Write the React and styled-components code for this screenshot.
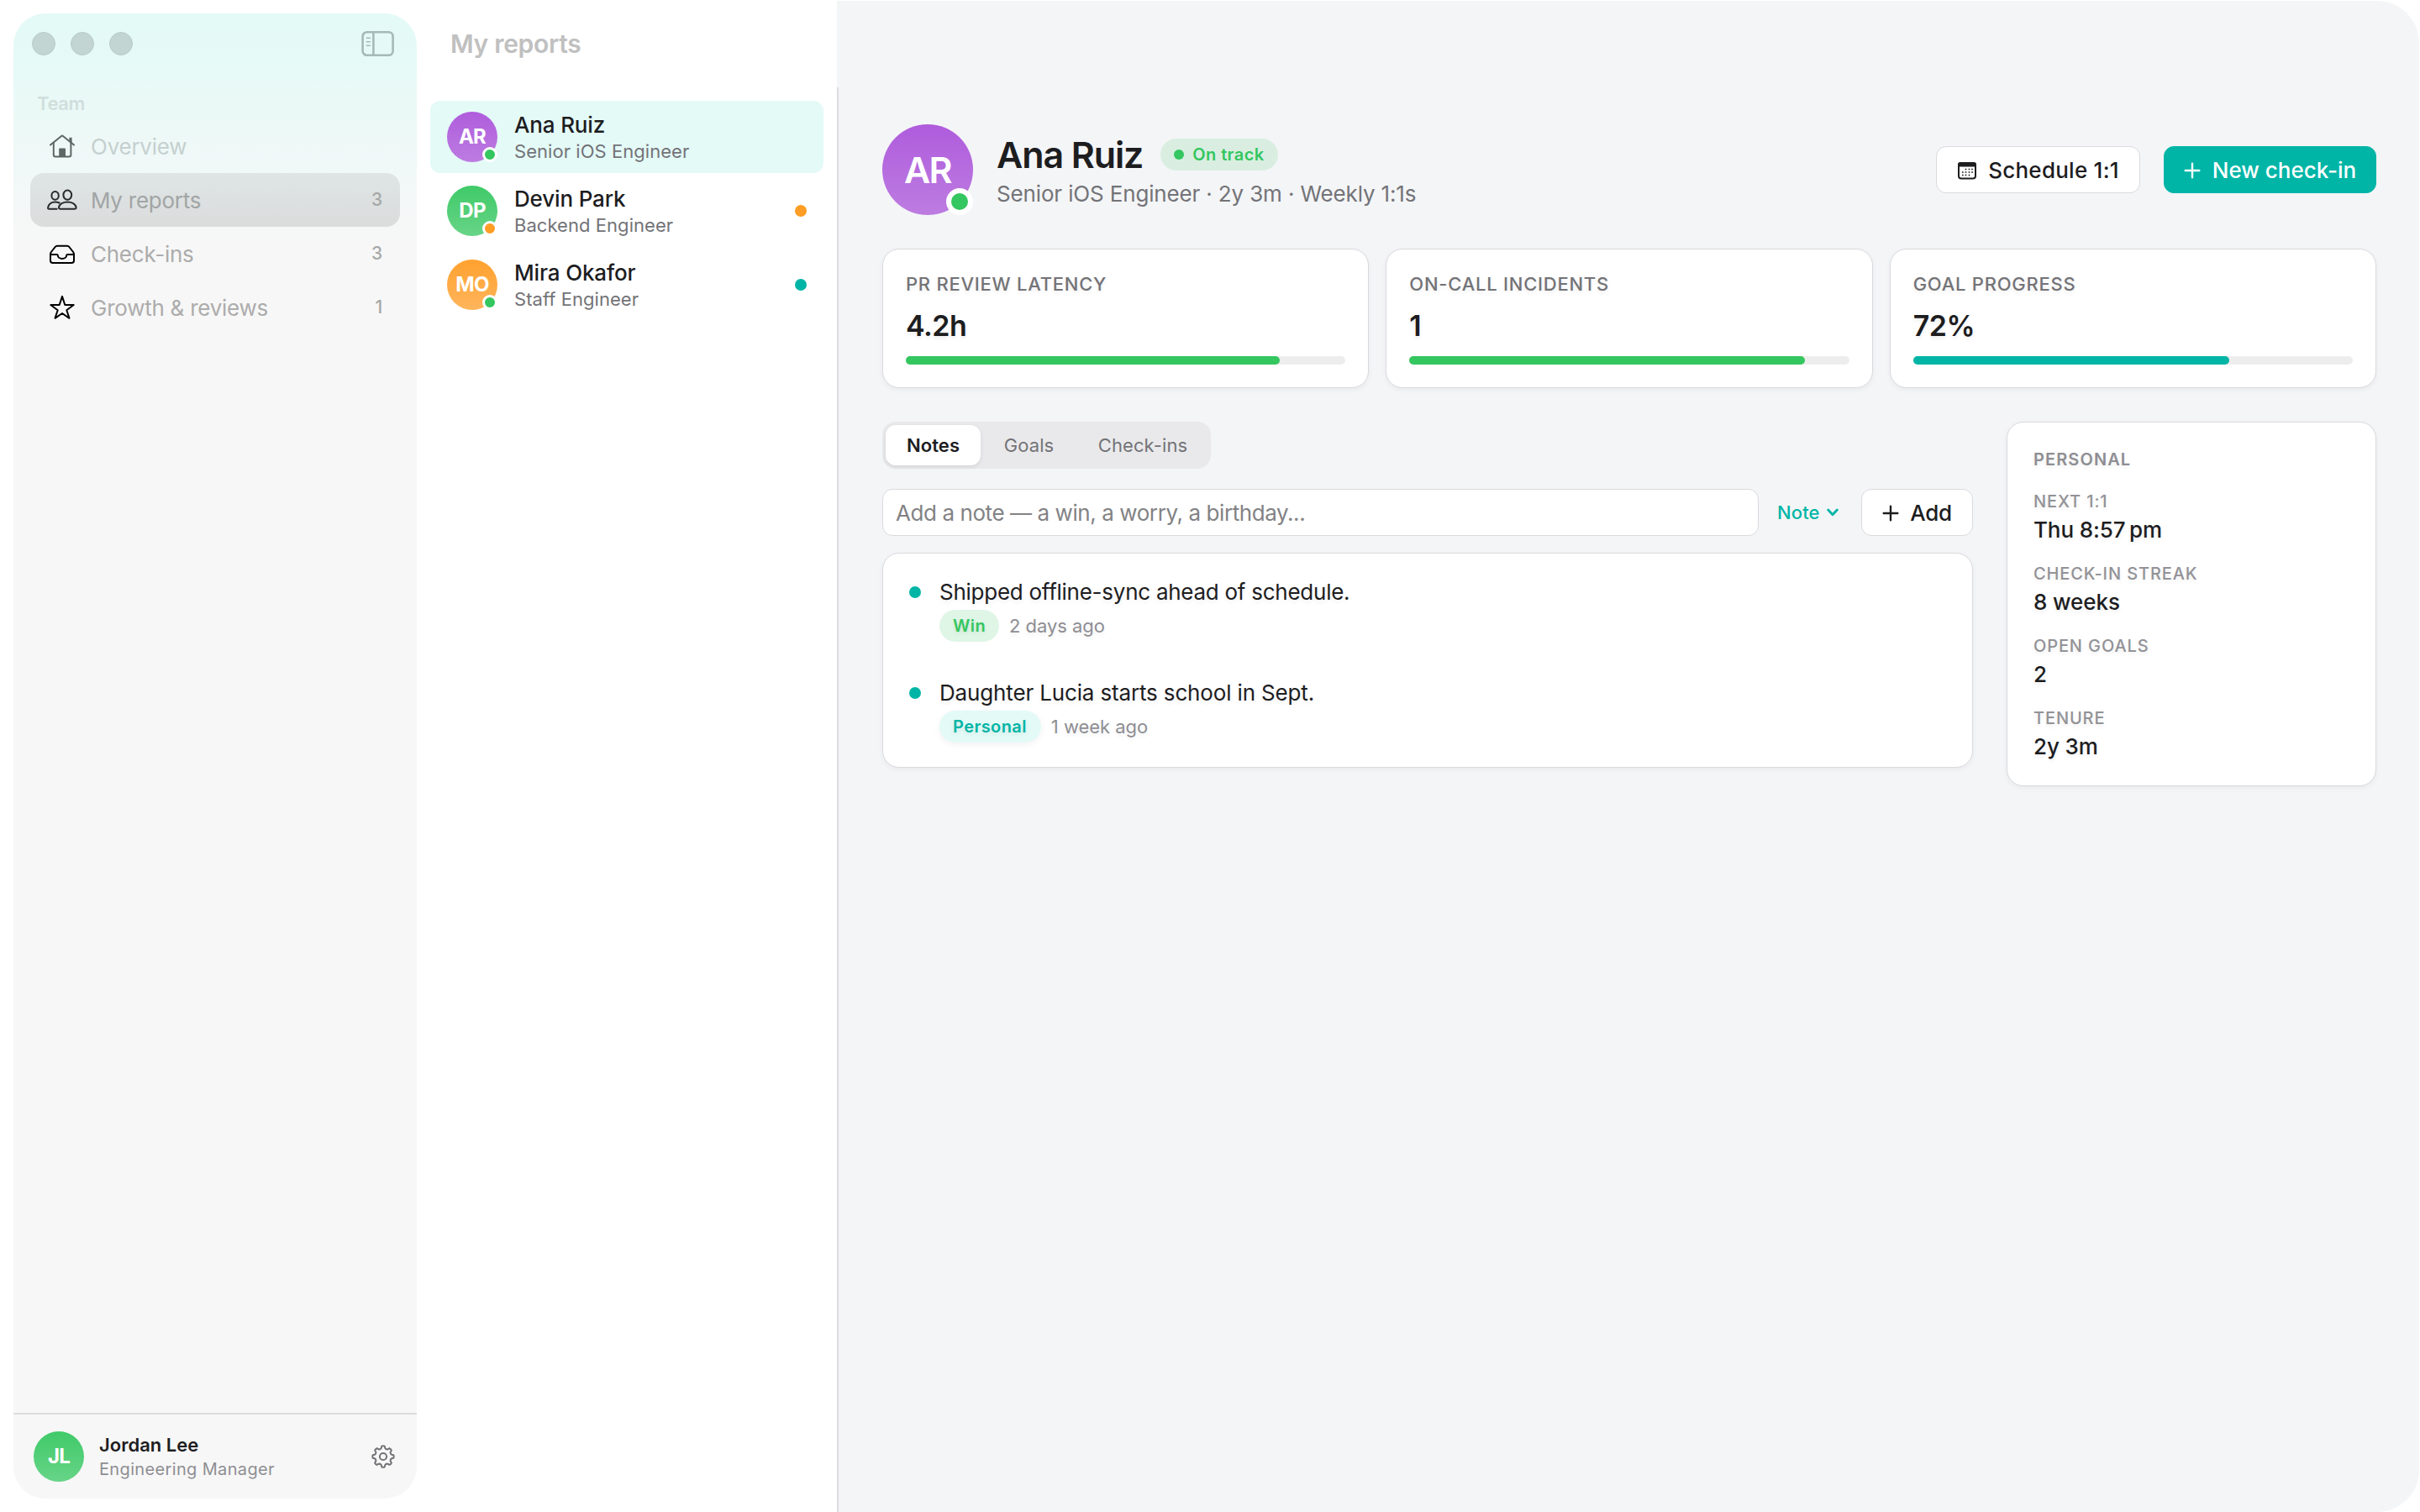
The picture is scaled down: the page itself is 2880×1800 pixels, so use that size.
import React from 'react';
import styled, { createGlobalStyle } from 'styled-components';

const teal = '#00b5a6';
const green = '#34c65f';
const orange = '#ff9d24';
const ink = '#1d1d1f';
const muted = '#737377';
const faint = '#8e8e93';
const cardBorder = '#dadade';

const gradients = {
  purple: 'linear-gradient(180deg, #af5cdc 0%, #bd7ce1 100%)',
  green: 'linear-gradient(180deg, #40ca69 0%, #67d487 100%)',
  orange: 'linear-gradient(180deg, #ffa12f 0%, #ffb55c 100%)',
};

const GlobalStyle = createGlobalStyle`
  * { box-sizing: border-box; }
  body {
    margin: 0;
    background: #fff;
    color: ${ink};
    font-family: Inter, 'Noto Sans', sans-serif;
    font-size: 26px;
    line-height: 32px;
  }
  button, input { font: inherit; margin: 0; }
`;

const Window = styled.div`
  display: flex;
  width: 2880px;
  height: 1800px;
  overflow: hidden;
  background: #fff;
`;

/* ---------- Sidebar ---------- */

const Sidebar = styled.aside`
  display: flex;
  flex-direction: column;
  flex: none;
  width: 480px;
  margin: 16px 0 16px 16px;
  border-radius: 38px;
  overflow: hidden;
  background: linear-gradient(180deg, #e3faf7 0, #e5faf7 44px, #eaf9f6 112px, #f1f8f8 186px, #f7f7f7 270px);
`;

const TitleBar = styled.div`
  display: flex;
  align-items: center;
  justify-content: space-between;
  height: 72px;
  padding: 0 26px 0 22px;
`;

const Lights = styled.div`
  display: flex;
  gap: 18px;
`;

const Light = styled.span`
  width: 28px;
  height: 28px;
  border-radius: 50%;
  background: #c3d5d3;
  border: 1px solid #b9cbc9;
`;

const SectionLabel = styled.div`
  margin-top: 16px;
  padding-left: 28px;
  font-size: 22px;
  font-weight: 600;
  line-height: 38px;
  letter-spacing: -0.4px;
  color: #d0dfdc;
`;

const Nav = styled.nav`
  display: flex;
  flex-direction: column;
  padding: 0 20px;
`;

const NavItem = styled.a`
  display: flex;
  align-items: center;
  height: 64px;
  padding: 0 21px 0 18px;
  border-radius: 16px;
  letter-spacing: -0.25px;
  color: ${p => p.$color};
  background: ${p => (p.$active ? 'linear-gradient(180deg, rgba(0, 0, 0, 0.08), rgba(0, 0, 0, 0.11))' : 'transparent')};
`;

const NavIcon = styled.span`
  display: flex;
  justify-content: center;
  width: 40px;
  margin-right: 14px;
  color: ${p => p.$color};
`;

const NavLabel = styled.span`
  padding-top: 2px;
`;

const NavCount = styled.span`
  margin-left: auto;
  font-size: 21px;
  font-weight: 500;
  color: #a6a8a7;
`;

const SidebarFooter = styled.div`
  display: flex;
  align-items: center;
  height: 102px;
  margin-top: auto;
  padding: 0 26px 0 24px;
  border-top: 2px solid #dddddd;
`;

const UserText = styled.div`
  flex: 1;
  margin-left: 18px;
  line-height: 28px;
`;

const UserName = styled.div`
  font-size: 22px;
  font-weight: 600;
`;

const UserRole = styled.div`
  margin: 1px 0 -1px;
  font-size: 20px;
  letter-spacing: 0.35px;
  color: ${faint};
`;

/* ---------- Avatar ---------- */

const AvatarCircle = styled.div`
  position: relative;
  display: flex;
  align-items: center;
  justify-content: center;
  flex: none;
  width: ${p => (p.$large ? 108 : 60)}px;
  height: ${p => (p.$large ? 108 : 60)}px;
  border-radius: 50%;
  background: ${p => gradients[p.$tone]};
  color: #fff;
  font-size: ${p => (p.$large ? 43 : 24)}px;
  font-weight: ${p => (p.$large ? 600 : 700)};
  letter-spacing: ${p => (p.$large ? -1.6 : -0.8)}px;
`;

const StatusBadge = styled.span`
  position: absolute;
  right: 0;
  bottom: 0;
  width: ${p => (p.$large ? 32 : 18)}px;
  height: ${p => (p.$large ? 32 : 18)}px;
  border: ${p => (p.$large ? 6 : 3)}px solid #fff;
  border-radius: 50%;
  background: ${p => p.$color};
`;

/* ---------- Reports list ---------- */

const ListPane = styled.section`
  flex: none;
  width: 500px;
  padding: 0 16px;
`;

const ListTitle = styled.h1`
  margin: 0;
  padding-left: 24px;
  height: 120px;
  font-size: 30px;
  font-weight: 600;
  line-height: 104px;
  letter-spacing: -0.3px;
  color: #c0c0c0;
`;

const ReportList = styled.div`
  display: flex;
  flex-direction: column;
  gap: 2px;
`;

const ReportRow = styled.div`
  display: flex;
  align-items: center;
  height: 86px;
  padding: 0 20px;
  border-radius: 12px;
  background: ${p => (p.$active ? '#e4faf7' : 'transparent')};
`;

const ReportText = styled.div`
  display: flex;
  flex-direction: column;
  gap: 1px;
  flex: 1;
  margin-left: 20px;
`;

const ReportName = styled.div`
  margin-top: 1px;
  font-weight: 500;
  letter-spacing: -0.15px;
`;

const ReportRole = styled.div`
  font-size: 22px;
  line-height: 28px;
  letter-spacing: 0.05px;
  color: ${muted};
`;

const Dot = styled.span`
  flex: none;
  width: ${p => p.$size || 14}px;
  height: ${p => p.$size || 14}px;
  border-radius: 50%;
  background: ${p => p.$color};
`;

/* ---------- Main ---------- */

const Main = styled.main`
  flex: 1;
  display: flex;
  min-width: 0;
  margin: 1px 1px 0 0;
  background: #f4f5f7;
  border-radius: 0 50px 50px 0;
`;

const Divider = styled.div`
  flex: none;
  width: 2px;
  margin-top: 103px;
  background: #dddde0;
`;

const Content = styled.div`
  flex: 1;
  min-width: 0;
  padding: 147px 51px 0 52px;
`;

const ProfileHeader = styled.header`
  display: flex;
  align-items: center;
  height: 108px;
`;

const ProfileText = styled.div`
  flex: 1;
  margin-left: 28px;
`;

const NameLine = styled.div`
  display: flex;
  align-items: center;
  gap: 21px;
  height: 52px;
`;

const ProfileName = styled.h2`
  margin: 0;
  font-size: 43px;
  font-weight: 600;
  line-height: 52px;
  letter-spacing: -1.1px;
`;

const ProfileMeta = styled.div`
  padding: 5px 0 0;
  margin-bottom: -1px;
  letter-spacing: -0.15px;
  color: ${muted};
`;

const pillColors = {
  green: { bg: '#dff5e6', fg: green },
  mint: { bg: '#d9eee1', fg: green },
  teal: { bg: '#e4faf7', fg: teal },
};

const Pill = styled.span`
  display: inline-flex;
  align-items: center;
  gap: 10px;
  height: 38px;
  padding: 0 ${p => (p.$tone === 'green' ? 16 : 17)}px 0 16px;
  border-radius: 19px;
  font-size: 20px;
  font-weight: 600;
  line-height: 36px;
  letter-spacing: 0.4px;
  background: ${p => pillColors[p.$tone].bg};
  color: ${p => pillColors[p.$tone].fg};
  box-shadow: ${p => (p.$tone === 'teal' ? '0 3px 8px rgba(0, 0, 0, 0.05)' : 'none')};
`;

const Actions = styled.div`
  display: flex;
  gap: 28px;
`;

const Button = styled.button`
  display: inline-flex;
  align-items: center;
  justify-content: center;
  flex: none;
  gap: ${p => p.$gap}px;
  width: ${p => p.$width}px;
  height: 56px;
  padding: 2px 0 0;
  border: 1px solid ${p => (p.$primary ? teal : cardBorder)};
  border-radius: 12px;
  background: ${p => (p.$primary ? teal : '#fff')};
  color: ${p => (p.$primary ? '#fff' : ink)};
  font-weight: 500;
  letter-spacing: ${p => p.$tracking || 0}px;
`;

const Card = styled.div`
  border: 1px solid ${cardBorder};
  border-radius: 20px;
  background: #fff;
  box-shadow: 0 2px 6px rgba(0, 0, 0, 0.05);
  text-shadow: 0 3px 5px rgba(0, 0, 0, 0.07);
`;

const Stats = styled.div`
  display: grid;
  grid-template-columns: repeat(3, 1fr);
  gap: 20px;
  margin-top: 40px;
`;

const StatCard = styled(Card)`
  height: 166px;
  padding: 27px;
`;

const StatLabel = styled.div`
  font-size: 22px;
  font-weight: 500;
  line-height: 28px;
  letter-spacing: 0.75px;
  color: ${muted};
`;

const StatValue = styled.div`
  margin: 16px 0;
  font-size: 34px;
  font-weight: 600;
  line-height: 40px;
  letter-spacing: -0.5px;
`;

const Track = styled.div`
  height: 10px;
  border-radius: 5px;
  background: #ededed;
`;

const Fill = styled.div`
  height: 100%;
  border-radius: 5px;
  background: ${p => p.$color};
`;

const Columns = styled.div`
  display: grid;
  grid-template-columns: 1fr 440px;
  align-items: start;
  gap: 40px;
  margin-top: 40px;
`;

const Tabs = styled.div`
  display: inline-flex;
  height: 56px;
  padding: 4px 3px 4px 4px;
  border-radius: 16px;
  background: #e9e9eb;
`;

const Tab = styled.div`
  width: ${p => p.$width}px;
  border-radius: 12px;
  font-size: 22px;
  line-height: 48px;
  text-align: center;
  font-weight: ${p => (p.$active ? 600 : 400)};
  letter-spacing: 0.08px;
  color: ${p => (p.$active ? ink : muted)};
  background: ${p => (p.$active ? '#fff' : 'transparent')};
  box-shadow: ${p => (p.$active ? '0 2px 5px rgba(0, 0, 0, 0.09)' : 'none')};
`;

const Composer = styled.div`
  display: flex;
  align-items: center;
  height: 56px;
  margin: 24px 0 20px;
`;

const NoteInput = styled.input`
  flex: 1;
  min-width: 0;
  height: 56px;
  padding: 1px 16px 0 15px;
  border: 1px solid ${cardBorder};
  border-radius: 12px;
  background: #fff;
  letter-spacing: -0.42px;
  outline: none;
  &::placeholder {
    color: #828284;
    opacity: 1;
  }
`;

const TypePicker = styled.div`
  display: flex;
  align-items: center;
  gap: 8px;
  width: 122px;
  padding-left: 22px;
  font-size: 22px;
  font-weight: 500;
  letter-spacing: 0.1px;
  color: ${teal};
`;

const NotesCard = styled(Card)`
  display: flex;
  flex-direction: column;
  gap: 45px;
  padding: 30px 31px 29px;
`;

const Note = styled.div`
  display: grid;
  grid-template-columns: 14px 1fr;
  column-gap: 22px;
  row-gap: 5px;
  align-items: center;
`;

const NoteText = styled.div`
  letter-spacing: ${p => p.$tracking}px;
`;

const NoteMeta = styled.div`
  grid-column: 2;
  display: flex;
  align-items: center;
  gap: 12px;
`;

const NoteTime = styled.span`
  font-size: 22px;
  letter-spacing: -0.05px;
  color: ${faint};
`;

const PersonalCard = styled(Card)`
  display: flex;
  flex-direction: column;
  gap: 23px;
  padding: 31px 30px 30px 31px;
`;

const PersonalTitle = styled.div`
  margin-bottom: 1px;
  font-size: 20px;
  font-weight: 600;
  line-height: 26px;
  letter-spacing: 1.1px;
  color: ${faint};
`;

const FactLabel = styled.div`
  margin-bottom: 5px;
  font-size: 20px;
  font-weight: 500;
  line-height: 26px;
  letter-spacing: 0.88px;
  color: #929297;
`;

const FactValue = styled.div`
  font-weight: 500;
  letter-spacing: -0.1px;
`;

/* ---------- Icons ---------- */

const stroke = { fill: 'none', stroke: 'currentColor', strokeLinecap: 'round', strokeLinejoin: 'round' };

const PanelIcon = () => (
  <svg width="40" height="32" viewBox="0 0 40 32" {...stroke} stroke="#a6b9b7" strokeWidth="2.6">
    <rect x="1.6" y="2.3" width="36" height="27.4" rx="5" />
    <path d="M14.4 2.3v27.4" />
    <path d="M6.4 9.2h4M6.4 13.7h4M6.4 18.2h4" strokeWidth="1.6" />
  </svg>
);

const HomeIcon = () => (
  <svg width="32" height="30" viewBox="0 0 32 30" {...stroke} strokeWidth="2">
    <path d="M2 13.6 15.1 2.9q.9-.7 1.8 0L30 13.6" />
    <path d="M5.8 11v14.2q0 2.3 2.3 2.3h16q2.3 0 2.3-2.3V11" />
    <path d="M24.4 4.7h3.2v7.4l-3.2-2.7z" fill="currentColor" stroke="none" />
    <path d="M12.2 27.5v-9q0-1 1-1h5.8q1 0 1 1v9z" fill="currentColor" stroke="none" />
  </svg>
);

const PeopleIcon = () => (
  <svg width="36" height="26" viewBox="0 0 36 26" {...stroke} strokeWidth="2">
    <ellipse cx="9.6" cy="7.9" rx="4.2" ry="4.8" />
    <ellipse cx="24.3" cy="7.1" rx="4.9" ry="5.6" />
    <path d="M11.6 23.7H2.4q-1.6 0-1.3-1.6C1.9 18 5.3 15.4 9.6 15.4q2.8 0 5 1.1" />
    <path d="M15.6 23.7q-2 0-1.6-1.9c.8-3.9 5-6.4 10.3-6.4s9.5 2.5 10.3 6.4q.4 1.9-1.6 1.9z" />
  </svg>
);

const TrayIcon = () => (
  <svg width="32" height="26" viewBox="0 -2 32 26" {...stroke} strokeWidth="2">
    <path d="M2 11.8v7.4q0 2.8 2.8 2.8h22.4q2.8 0 2.8-2.8v-7.4q0-1.6-.9-2.8l-4.7-6q-.9-1.2-2.4-1.2H10q-1.5 0-2.4 1.2L2.9 9Q2 10.2 2 11.8z" />
    <path d="M2.2 11.9h7.4q1.2 0 1.2 1.1c0 2.2 2.3 3.9 5.2 3.9s5.2-1.7 5.2-3.9q0-1.1 1.2-1.1h7.4" />
  </svg>
);

const StarIcon = () => (
  <svg width="32" height="30" viewBox="0 0 32 30" {...stroke} strokeWidth="2">
    <path d="M16 1.9 19.3 12h10.4l-8.4 6.2 3.2 9.6-8.5-5.8-8.5 5.8 3.2-9.6L2.3 12h10.4z" />
  </svg>
);

// outline of an eight-tooth cog, one tooth pointing up
const cogPath = (() => {
  const pt = (r, deg) => {
    const a = ((deg - 90) * Math.PI) / 180;
    return `${(14 + r * Math.cos(a)).toFixed(2)} ${(14 + r * Math.sin(a)).toFixed(2)}`;
  };
  let d = '';
  for (let i = 0; i < 8; i++) {
    const t = i * 45;
    d += `${i ? 'L' : 'M'}${pt(10.3, t - 13)}L${pt(12.4, t - 8)}Q${pt(13.1, t)} ${pt(12.4, t + 8)}L${pt(10.3, t + 13)}`;
    d += `Q${pt(8.9, t + 22.5)} ${pt(10.3, t + 32)}`;
  }
  return `${d}Z`;
})();

const GearIcon = () => (
  <svg width="28" height="28" viewBox="0 0 28 28" {...stroke} stroke="#737377" strokeWidth="2">
    <path d={cogPath} />
    <circle cx="14" cy="14" r="4.1" />
  </svg>
);

const dots = [
  [10.5, 9.5], [14.5, 9.5], [18, 9.5],
  [6.8, 13], [10.5, 13], [14.5, 13], [18, 13],
  [6.8, 16.5], [10.5, 16.5], [14.5, 16.5],
];

const CalendarIcon = () => (
  <svg width="24" height="22" viewBox="0 0 24 22">
    <rect x="2" y="2" width="20" height="18.4" rx="3" fill="none" stroke={ink} strokeWidth="2" />
    <path d="M1 6.600V4.200Q1 1 4.200 1h15.600Q23 1 23 4.200v2.400z" fill={ink} />
    {dots.map(([x, y]) => <rect key={`${x}-${y}`} x={x - 0.8} y={y - 0.8} width="1.6" height="1.6" fill={ink} />)}
  </svg>
);

const PlusIcon = () => (
  <svg width="20" height="20" viewBox="0 0 20 20" {...stroke} strokeWidth="2.4">
    <path d="M10 1.7v16.6M1.7 10h16.6" />
  </svg>
);

const ChevronIcon = () => (
  <svg width="14" height="10" viewBox="0 0 14 10" {...stroke} strokeWidth="2.8">
    <path d="M1.7 2 7 7.7 12.3 2" />
  </svg>
);

/* ---------- Data ---------- */

const navItems = [
  { label: 'Overview', icon: HomeIcon, color: '#c5d0cf', iconColor: '#5d6765' },
  { label: 'My reports', icon: PeopleIcon, color: '#a1a5a5', iconColor: '#272b2b', count: 3, active: true },
  { label: 'Check-ins', icon: TrayIcon, color: '#acacac', iconColor: '#000', count: 3 },
  { label: 'Growth & reviews', icon: StarIcon, color: '#acacac', iconColor: '#000', count: 1 },
];

const reports = [
  { initials: 'AR', name: 'Ana Ruiz', role: 'Senior iOS Engineer', tone: 'purple', status: green, active: true },
  { initials: 'DP', name: 'Devin Park', role: 'Backend Engineer', tone: 'green', status: orange, flag: orange },
  { initials: 'MO', name: 'Mira Okafor', role: 'Staff Engineer', tone: 'orange', status: green, flag: teal },
];

const stats = [
  { label: 'PR REVIEW LATENCY', value: '4.2h', percent: 85, color: green },
  { label: 'ON-CALL INCIDENTS', value: '1', percent: 90, color: green },
  { label: 'GOAL PROGRESS', value: '72%', percent: 72, color: teal },
];

const notes = [
  { text: 'Shipped offline-sync ahead of schedule.', tag: 'Win', tone: 'green', time: '2 days ago', tracking: -0.26 },
  { text: 'Daughter Lucia starts school in Sept.', tag: 'Personal', tone: 'teal', time: '1 week ago', tracking: -0.15 },
];

const facts = [
  ['NEXT 1:1', 'Thu 8:57\u2009pm'],
  ['CHECK-IN STREAK', '8 weeks'],
  ['OPEN GOALS', '2'],
  ['TENURE', '2y 3m'],
];

const Avatar = ({ initials, tone, status, large }) => (
  <AvatarCircle $tone={tone} $large={large}>
    {initials}
    {status && <StatusBadge $color={status} $large={large} />}
  </AvatarCircle>
);

const App = () => (
  <Window>
    <GlobalStyle />
    <Sidebar>
      <TitleBar>
        <Lights><Light /><Light /><Light /></Lights>
        <PanelIcon />
      </TitleBar>
      <SectionLabel>Team</SectionLabel>
      <Nav>
        {navItems.map(({ label, icon: Icon, color, iconColor, count, active }) => (
          <NavItem key={label} $color={color} $active={active}>
            <NavIcon $color={iconColor}><Icon /></NavIcon>
            <NavLabel>{label}</NavLabel>
            {count && <NavCount>{count}</NavCount>}
          </NavItem>
        ))}
      </Nav>
      <SidebarFooter>
        <Avatar initials="JL" tone="green" />
        <UserText>
          <UserName>Jordan Lee</UserName>
          <UserRole>Engineering Manager</UserRole>
        </UserText>
        <GearIcon />
      </SidebarFooter>
    </Sidebar>

    <ListPane>
      <ListTitle>My reports</ListTitle>
      <ReportList>
        {reports.map(r => (
          <ReportRow key={r.name} $active={r.active}>
            <Avatar initials={r.initials} tone={r.tone} status={r.status} />
            <ReportText>
              <ReportName>{r.name}</ReportName>
              <ReportRole>{r.role}</ReportRole>
            </ReportText>
            {r.flag && <Dot $color={r.flag} />}
          </ReportRow>
        ))}
      </ReportList>
    </ListPane>

    <Main>
      <Divider />
      <Content>
        <ProfileHeader>
          <Avatar initials="AR" tone="purple" status={green} large />
          <ProfileText>
            <NameLine>
              <ProfileName>Ana Ruiz</ProfileName>
              <Pill $tone="mint"><Dot $color={green} $size={12} />On track</Pill>
            </NameLine>
            <ProfileMeta>Senior iOS Engineer · 2y 3m · Weekly 1:1s</ProfileMeta>
          </ProfileText>
          <Actions>
            <Button $width={243} $gap={13} $tracking={0.25}><CalendarIcon />Schedule 1:1</Button>
            <Button $width={253} $gap={14} $primary><PlusIcon />New check-in</Button>
          </Actions>
        </ProfileHeader>

        <Stats>
          {stats.map(s => (
            <StatCard key={s.label}>
              <StatLabel>{s.label}</StatLabel>
              <StatValue>{s.value}</StatValue>
              <Track><Fill $color={s.color} style={{ width: `${s.percent}%` }} /></Track>
            </StatCard>
          ))}
        </Stats>

        <Columns>
          <div>
            <Tabs>
              <Tab $width={113} $active>Notes</Tab>
              <Tab $width={115}>Goals</Tab>
              <Tab $width={156}>Check-ins</Tab>
            </Tabs>
            <Composer>
              <NoteInput placeholder="Add a note — a win, a worry, a birthday..." />
              <TypePicker>Note<ChevronIcon /></TypePicker>
              <Button $width={133} $gap={13} $tracking={-0.3}><PlusIcon />Add</Button>
            </Composer>
            <NotesCard>
              {notes.map(n => (
                <Note key={n.tag}>
                  <Dot $color={teal} />
                  <NoteText $tracking={n.tracking}>{n.text}</NoteText>
                  <NoteMeta>
                    <Pill $tone={n.tone}>{n.tag}</Pill>
                    <NoteTime>{n.time}</NoteTime>
                  </NoteMeta>
                </Note>
              ))}
            </NotesCard>
          </div>

          <PersonalCard>
            <PersonalTitle>PERSONAL</PersonalTitle>
            {facts.map(([label, value]) => (
              <div key={label}>
                <FactLabel>{label}</FactLabel>
                <FactValue>{value}</FactValue>
              </div>
            ))}
          </PersonalCard>
        </Columns>
      </Content>
    </Main>
  </Window>
);

export default App;
